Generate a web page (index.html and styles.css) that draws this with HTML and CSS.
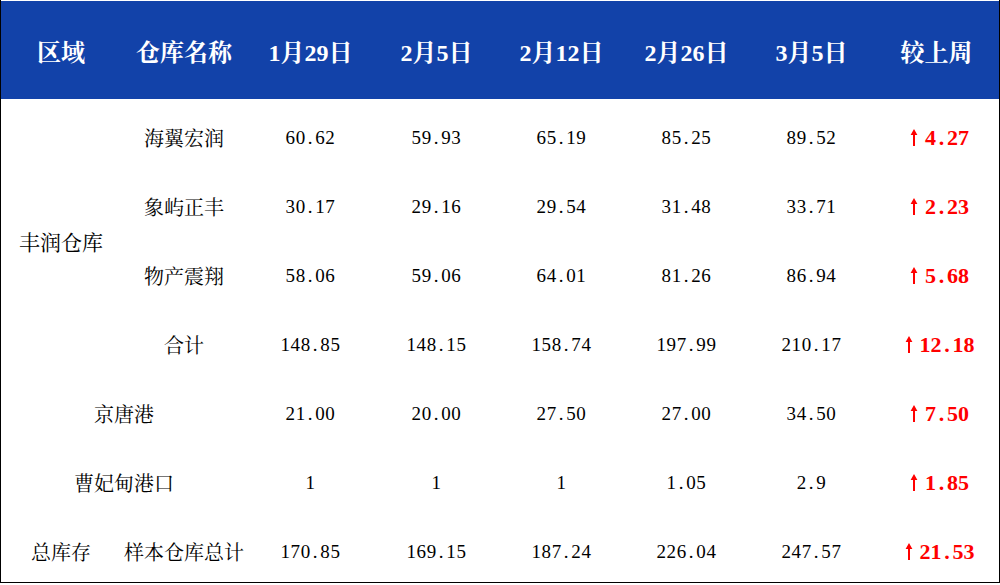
FILE: index.html
```html
<!DOCTYPE html>
<html lang="zh">
<head>
<meta charset="utf-8">
<link rel="stylesheet" href="styles.css">
</head>
<body>
<div class="frame">
<table class="grid">
  <colgroup>
    <col class="c1"><col class="c2"><col class="c3"><col class="cn"><col class="cn"><col class="cn"><col class="cn"><col class="cn">
  </colgroup>
  <thead>
    <tr>
      <th>区域</th><th>仓库名称</th><th>1月29日</th><th>2月5日</th><th>2月12日</th><th>2月26日</th><th>3月5日</th><th>较上周</th>
    </tr>
  </thead>
  <tbody>
    <tr>
      <td rowspan="4" class="region">丰润仓库</td>
      <td class="name">海翼宏润</td>
      <td>60<span class="dt">.</span>62</td><td>59<span class="dt">.</span>93</td><td>65<span class="dt">.</span>19</td><td>85<span class="dt">.</span>25</td><td>89<span class="dt">.</span>52</td>
      <td class="up"><svg class="arr" viewBox="0 0 20 17" width="20" height="17"><path d="M10 0 L13.4 6 L11 6 L11 17 L9 17 L9 6 L6.6 6 Z"/></svg>4<span class="dt">.</span>27</td>
    </tr>
    <tr>
      <td class="name">象屿正丰</td>
      <td>30<span class="dt">.</span>17</td><td>29<span class="dt">.</span>16</td><td>29<span class="dt">.</span>54</td><td>31<span class="dt">.</span>48</td><td>33<span class="dt">.</span>71</td>
      <td class="up"><svg class="arr" viewBox="0 0 20 17" width="20" height="17"><path d="M10 0 L13.4 6 L11 6 L11 17 L9 17 L9 6 L6.6 6 Z"/></svg>2<span class="dt">.</span>23</td>
    </tr>
    <tr>
      <td class="name">物产震翔</td>
      <td>58<span class="dt">.</span>06</td><td>59<span class="dt">.</span>06</td><td>64<span class="dt">.</span>01</td><td>81<span class="dt">.</span>26</td><td>86<span class="dt">.</span>94</td>
      <td class="up"><svg class="arr" viewBox="0 0 20 17" width="20" height="17"><path d="M10 0 L13.4 6 L11 6 L11 17 L9 17 L9 6 L6.6 6 Z"/></svg>5<span class="dt">.</span>68</td>
    </tr>
    <tr>
      <td class="name">合计</td>
      <td>148<span class="dt">.</span>85</td><td>148<span class="dt">.</span>15</td><td>158<span class="dt">.</span>74</td><td>197<span class="dt">.</span>99</td><td>210<span class="dt">.</span>17</td>
      <td class="up"><svg class="arr" viewBox="0 0 20 17" width="20" height="17"><path d="M10 0 L13.4 6 L11 6 L11 17 L9 17 L9 6 L6.6 6 Z"/></svg>12<span class="dt">.</span>18</td>
    </tr>
    <tr>
      <td colspan="2" class="name">京唐港</td>
      <td>21<span class="dt">.</span>00</td><td>20<span class="dt">.</span>00</td><td>27<span class="dt">.</span>50</td><td>27<span class="dt">.</span>00</td><td>34<span class="dt">.</span>50</td>
      <td class="up"><svg class="arr" viewBox="0 0 20 17" width="20" height="17"><path d="M10 0 L13.4 6 L11 6 L11 17 L9 17 L9 6 L6.6 6 Z"/></svg>7<span class="dt">.</span>50</td>
    </tr>
    <tr>
      <td colspan="2" class="name">曹妃甸港口</td>
      <td>1</td><td>1</td><td>1</td><td>1<span class="dt">.</span>05</td><td>2<span class="dt">.</span>9</td>
      <td class="up"><svg class="arr" viewBox="0 0 20 17" width="20" height="17"><path d="M10 0 L13.4 6 L11 6 L11 17 L9 17 L9 6 L6.6 6 Z"/></svg>1<span class="dt">.</span>85</td>
    </tr>
    <tr>
      <td class="name">总库存</td>
      <td class="name">样本仓库总计</td>
      <td>170<span class="dt">.</span>85</td><td>169<span class="dt">.</span>15</td><td>187<span class="dt">.</span>24</td><td>226<span class="dt">.</span>04</td><td>247<span class="dt">.</span>57</td>
      <td class="up"><svg class="arr" viewBox="0 0 20 17" width="20" height="17"><path d="M10 0 L13.4 6 L11 6 L11 17 L9 17 L9 6 L6.6 6 Z"/></svg>21<span class="dt">.</span>53</td>
    </tr>
  </tbody>
</table>
</div>
</body>
</html>
```
FILE: styles.css
```css
html, body {
  margin: 0;
  padding: 0;
  background: #ffffff;
}
.frame {
  width: 998px;
  padding-top: 1px;
  border-left: 1px solid #000;
  border-right: 1px solid #000;
  border-bottom: 1px solid #000;
}
.grid {
  width: 998px;
  border-collapse: collapse;
  table-layout: fixed;
  font-family: "Liberation Serif", "Noto Serif CJK SC", "Noto Sans CJK SC", serif;
  color: #000;
}
.c1 { width: 120px; }
.c2 { width: 126px; }
.c3 { width: 127px; }
.cn { width: 125px; }
.grid th {
  height: 98px;
  padding: 0;
  background: #1242a9;
  color: #ffffff;
  font-size: 24px;
  font-weight: bold;
  text-align: center;
  vertical-align: middle;
}
.grid td {
  height: 69px;
  padding: 8px 0 0 0;
  box-sizing: border-box;
  font-size: 19px;
  letter-spacing: 0.6px;
  text-align: center;
  vertical-align: middle;
  white-space: nowrap;
}
.grid td.name,
.grid td.region {
  font-size: 20px;
  letter-spacing: 0;
}
.grid td.region {
  font-size: 21px;
}
.dt {
  display: inline-block;
  width: 0.5em;
  text-align: center;
}
.grid td.up {
  color: #ff0000;
  font-weight: bold;
  font-size: 22px;
  letter-spacing: 0;
}
.arr {
  fill: #ff0000;
  vertical-align: -1px;
  margin-right: 1px;
}
```
